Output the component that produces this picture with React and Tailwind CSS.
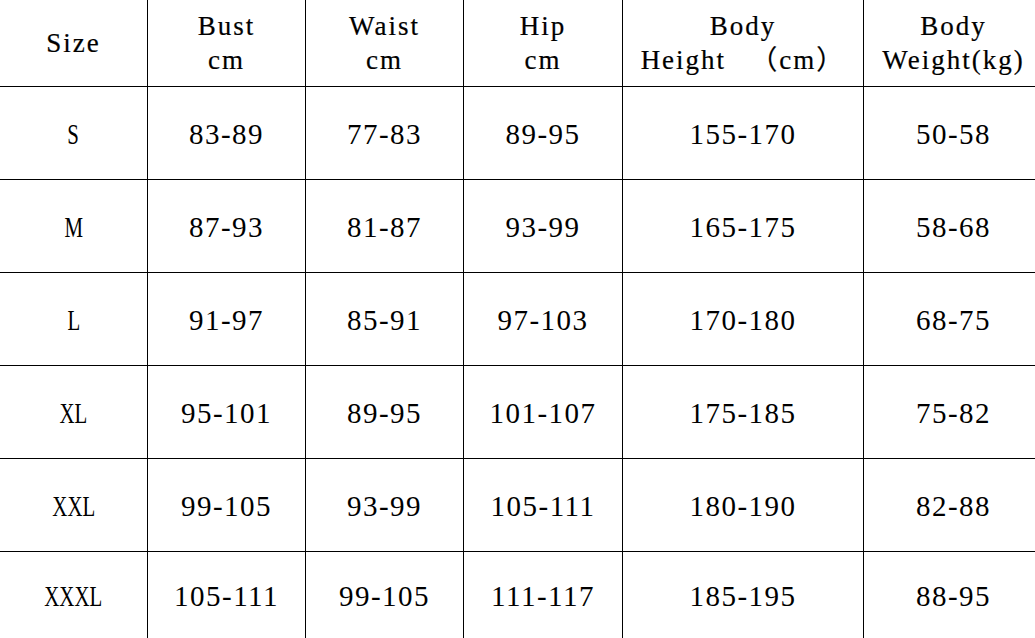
import React from "react";

const headers = [
  ["Size"],
  ["Bust", "cm"],
  ["Waist", "cm"],
  ["Hip", "cm"],
  ["Body", "Height \u3000（cm）"],
  ["Body", "Weight(kg)"],
];

const rows = [
  ["S", "83-89", "77-83", "89-95", "155-170", "50-58"],
  ["M", "87-93", "81-87", "93-99", "165-175", "58-68"],
  ["L", "91-97", "85-91", "97-103", "170-180", "68-75"],
  ["XL", "95-101", "89-95", "101-107", "175-185", "75-82"],
  ["XXL", "99-105", "93-99", "105-111", "180-190", "82-88"],
  ["XXXL", "105-111", "99-105", "111-117", "185-195", "88-95"],
];

const App = () => {
  return (
    <div
      className="w-[1035px] h-[638px] overflow-hidden bg-white text-black"
      style={{ fontFamily: '"Liberation Serif", "Noto Sans CJK SC", serif' }}
    >
      <div className="grid grid-cols-[148px_158px_158px_159px_241px_171px] grid-rows-[87px_93px_93px_93px_93px_93px_86px]">
        {headers.map((lines, i) => (
          <div
            key={"h" + i}
            className={
              "flex flex-col items-center justify-center border-b border-black text-[27px] leading-[34px] tracking-[2px] [-webkit-text-stroke:0.2px_black] " +
              (i < 5 ? "border-r" : "pl-2")
            }
          >
            {lines.map((l, j) => (
              <span key={j} className="whitespace-pre">
                {l}
              </span>
            ))}
          </div>
        ))}
        {rows.map((row, r) =>
          row.map((cell, c) => (
            <div
              key={r + "-" + c}
              className={
                "flex items-center justify-center pt-1 text-[29px] tracking-[1.5px] border-black " +
                (c < 5 ? "border-r " : "pl-2 ") +
                (r < 5 ? "border-b" : "")
              }
            >
              {c === 0 ? (
                <span className="inline-block scale-x-[0.72] tracking-normal">{cell}</span>
              ) : (
                cell
              )}
            </div>
          ))
        )}
      </div>
    </div>
  );
};

export default App;
